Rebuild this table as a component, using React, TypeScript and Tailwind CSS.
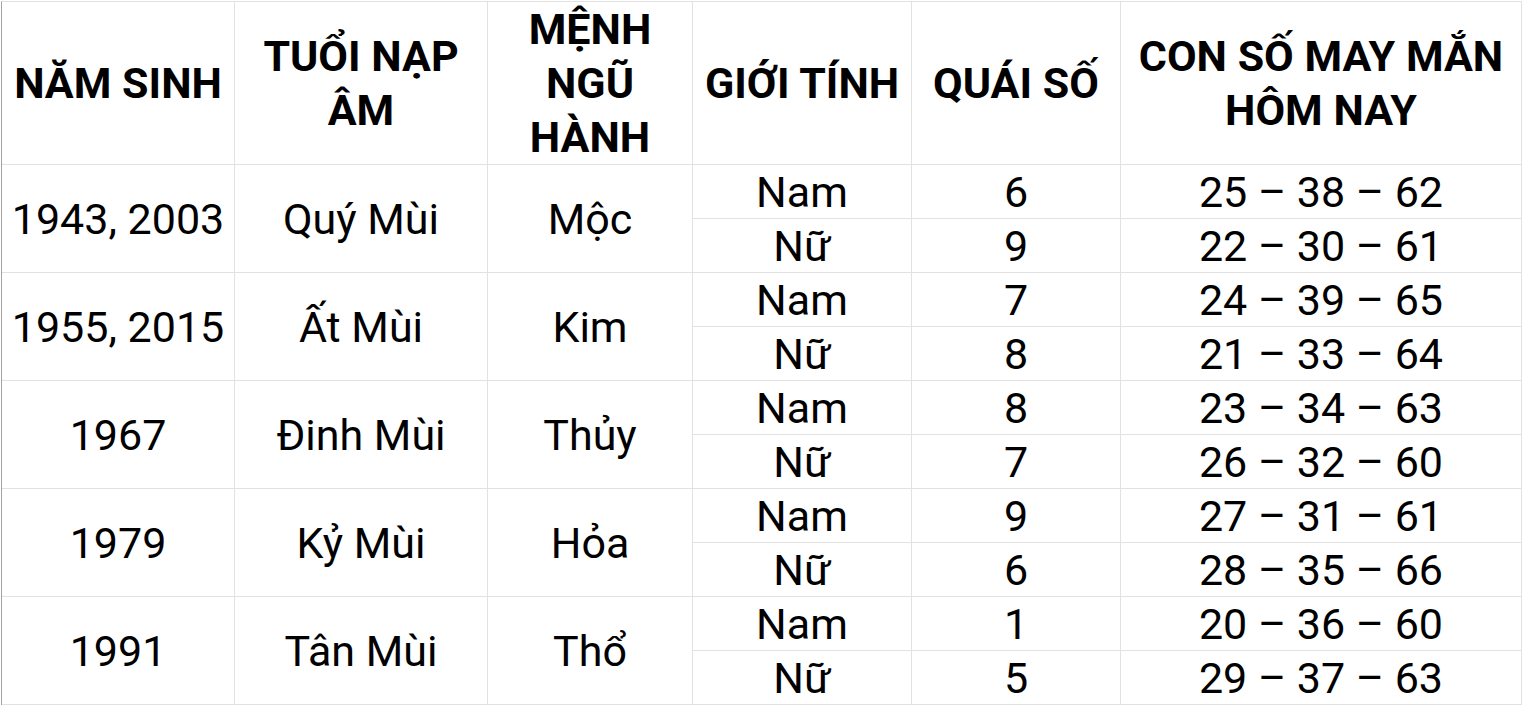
import React from "react";

type Group = {
  year: string;
  tuoi: string;
  menh: string;
  rows: { gt: string; qs: string; so: string }[];
};

const groups: Group[] = [
  {
    year: "1943, 2003",
    tuoi: "Quý Mùi",
    menh: "Mộc",
    rows: [
      { gt: "Nam", qs: "6", so: "25 – 38 – 62" },
      { gt: "Nữ", qs: "9", so: "22 – 30 – 61" },
    ],
  },
  {
    year: "1955, 2015",
    tuoi: "Ất Mùi",
    menh: "Kim",
    rows: [
      { gt: "Nam", qs: "7", so: "24 – 39 – 65" },
      { gt: "Nữ", qs: "8", so: "21 – 33 – 64" },
    ],
  },
  {
    year: "1967",
    tuoi: "Đinh Mùi",
    menh: "Thủy",
    rows: [
      { gt: "Nam", qs: "8", so: "23 – 34 – 63" },
      { gt: "Nữ", qs: "7", so: "26 – 32 – 60" },
    ],
  },
  {
    year: "1979",
    tuoi: "Kỷ Mùi",
    menh: "Hỏa",
    rows: [
      { gt: "Nam", qs: "9", so: "27 – 31 – 61" },
      { gt: "Nữ", qs: "6", so: "28 – 35 – 66" },
    ],
  },
  {
    year: "1991",
    tuoi: "Tân Mùi",
    menh: "Thổ",
    rows: [
      { gt: "Nam", qs: "1", so: "20 – 36 – 60" },
      { gt: "Nữ", qs: "5", so: "29 – 37 – 63" },
    ],
  },
];

const cell =
  "flex items-center justify-center text-center border-r border-b border-[#e2e2e2] overflow-hidden whitespace-nowrap";

export default function App() {
  return (
    <div
      className="bg-white w-[1522px] h-[706px] overflow-hidden text-black"
      style={{ fontFamily: "Roboto, 'Noto Sans', 'Liberation Sans', sans-serif" }}
    >
      <div className="ml-px mt-px border-l border-t border-l-[#a3a3a3] border-t-[#e2e2e2] grid grid-cols-[233px_253px_205px_219px_209px_401px] grid-rows-[163px_repeat(10,54px)] text-[43px] leading-[54px]">
        <div className={`${cell} font-bold`}>NĂM SINH</div>
        <div className={`${cell} font-bold`}>
          TUỔI NẠP
          <br />
          ÂM
        </div>
        <div className={`${cell} font-bold`}>
          MỆNH
          <br />
          NGŨ
          <br />
          HÀNH
        </div>
        <div className={`${cell} font-bold`}>GIỚI TÍNH</div>
        <div className={`${cell} font-bold`}>QUÁI SỐ</div>
        <div className={`${cell} font-bold`}>
          CON SỐ MAY MẮN
          <br />
          HÔM NAY
        </div>
        {groups.map((g) => (
          <React.Fragment key={g.year}>
            <div className={`${cell} row-span-2`}>{g.year}</div>
            <div className={`${cell} row-span-2`}>{g.tuoi}</div>
            <div className={`${cell} row-span-2`}>{g.menh}</div>
            <div className={cell}>{g.rows[0].gt}</div>
            <div className={cell}>{g.rows[0].qs}</div>
            <div className={cell}>{g.rows[0].so}</div>
            <div className={`${cell} col-start-4`}>{g.rows[1].gt}</div>
            <div className={cell}>{g.rows[1].qs}</div>
            <div className={cell}>{g.rows[1].so}</div>
          </React.Fragment>
        ))}
      </div>
    </div>
  );
}
